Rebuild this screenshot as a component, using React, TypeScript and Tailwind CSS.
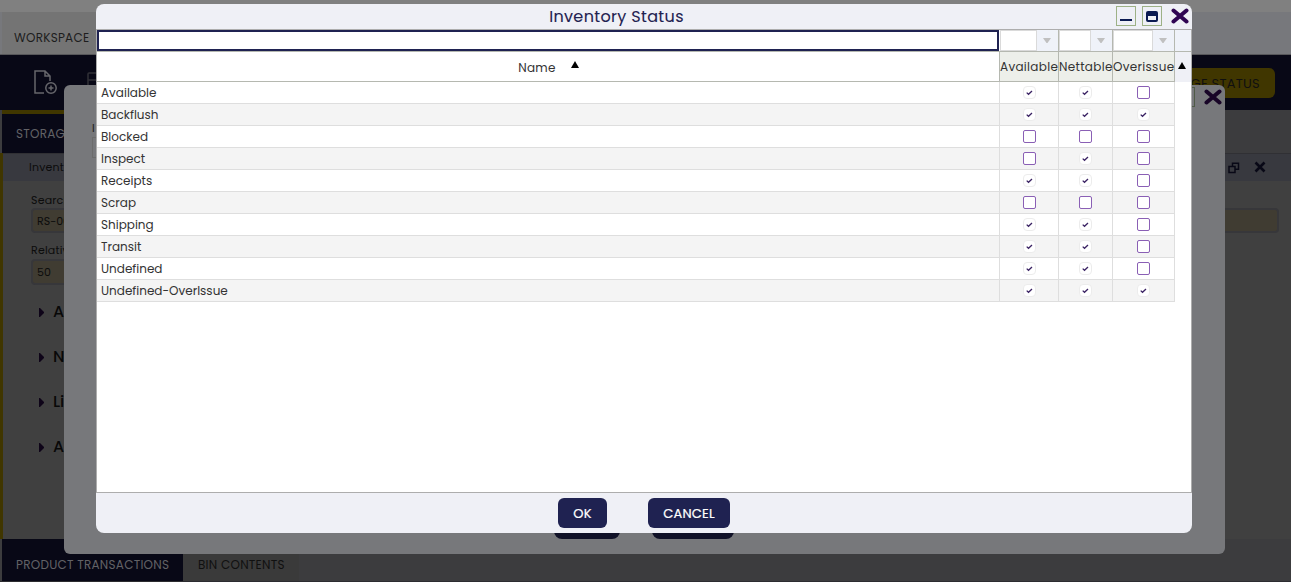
import React from "react";

type Row = { name: string; flags: boolean[] };

const rows: Row[] = [
  { name: "Available", flags: [true, true, false] },
  { name: "Backflush", flags: [true, true, true] },
  { name: "Blocked", flags: [false, false, false] },
  { name: "Inspect", flags: [false, true, false] },
  { name: "Receipts", flags: [true, true, false] },
  { name: "Scrap", flags: [false, false, false] },
  { name: "Shipping", flags: [true, true, false] },
  { name: "Transit", flags: [true, true, false] },
  { name: "Undefined", flags: [true, true, false] },
  { name: "Undefined-OverIssue", flags: [true, true, true] },
];

const columns = "grid grid-cols-[903px_59px_54px_62px_16px]";

function Check({ on }: { on: boolean }) {
  if (!on) {
    return <span className="block h-[13px] w-[13px] rounded-[2px] border border-[#8a5fb5] bg-white" />;
  }
  return (
    <span className="flex h-[13px] w-[13px] items-center justify-center rounded-[4px] border border-[#ececec] bg-white">
      <svg width="7" height="6" viewBox="0 0 7 6" fill="none" stroke="#3a2263" strokeWidth="1.3">
        <path d="M.7 2.6 2.5 4.3 6 1" />
      </svg>
    </span>
  );
}

function Cross({ className, color }: { className?: string; color: string }) {
  return (
    <svg className={className} viewBox="0 0 18 16" fill="none" stroke={color} strokeWidth="4" strokeLinecap="round">
      <path d="M2.5 2.5 15.5 13.5M15.5 2.5 2.5 13.5" />
    </svg>
  );
}

function Filter({ inner }: { inner: string }) {
  return (
    <div className="flex border-r border-[#b5b8b0] bg-[#eff2f9]">
      <div className={inner + " border border-[#dadada] bg-white"} />
      <div className="flex flex-1 items-center justify-center pr-px">
        <svg width="8" height="5" viewBox="0 0 8 5" fill="#c0c0c0"><path d="M0 0h8L4.5 5h-1z" /></svg>
      </div>
    </div>
  );
}

function Workspace() {
  return (
    <div className="flex h-[582px] flex-col bg-[#404040] text-[12px]">
      <div className="h-3 bg-[#808080]" />
      <div className="flex h-[43px] border-b border-[#57575a] bg-[#77787c] pl-[2px]">
        <div className="flex w-[110px] items-center bg-[#747474] pl-3 pt-[9px] tracking-[0.25px] text-[#1d1d1d]">WORKSPACE</div>
      </div>
      <div className="flex h-[55px] items-center justify-between bg-[#080816] pl-[33px] pr-4">
        <div className="flex items-center gap-[30px]">
          <svg width="25" height="25" viewBox="0 0 25 25" fill="none" stroke="#66666b" strokeWidth="1.5">
            <path d="M11 23H2V1h10l5 5v5M12 1v5h5" /><circle cx="18" cy="18" r="5.2" /><path d="M18 15.5v5M15.5 18h5" />
          </svg>
          <svg className="-ml-px" width="22" height="22" viewBox="0 0 22 22" fill="none" stroke="#303037" strokeWidth="1.5">
            <rect x="1" y="1" width="20" height="20" rx="1" /><path d="M1 8h20" />
          </svg>
        </div>
        <div className="flex h-[30px] w-[137px] items-center justify-end rounded-md bg-[#403600] pr-[15px] pt-[2px] text-[13px] tracking-[0.02em] text-[#101010]">CHANGE STATUS</div>
      </div>
      <div className="flex h-[43px] bg-[#3c3c3e] pl-[2px]">
        <div className="flex w-[100px] items-center border-t-4 border-[#403600] bg-[#080816] pl-[14px] tracking-[0.25px] text-[#626266]">STORAGE</div>
      </div>
      <div className="flex flex-1 flex-col border-l-[3px] border-[#403600] text-[11px] tracking-[0.2px] text-[#0c0c0c]">
        <div className="flex h-7 items-center justify-between border-t border-[#303034] bg-[#38393f] pl-[26px] pr-[25px]">
          <span>Invento</span>
          <span className="flex items-center gap-[14px]">
            <svg width="12" height="12" viewBox="0 0 12 12" fill="none" stroke="#080816" strokeWidth="1.5"><path d="M1 4.5h6v6H1zM4.5 4V1.2h6v6H7" /></svg>
            <svg className="mb-px" width="12" height="12" viewBox="0 0 12 12" fill="none" stroke="#080816" strokeWidth="2.6"><path d="m1.5 1.5 9 9M10.5 1.5l-9 9" /></svg>
          </span>
        </div>
        <div className="flex flex-col pl-7 pr-3">
          <span className="mt-[10px] h-[17px] leading-[18px]">Search</span>
          <div className="h-[25px] rounded border-2 border-[#37373a] bg-[#403c32] pl-1 leading-[22px] tracking-normal">RS-001</div>
          <span className="mt-[8px] h-[18px] leading-[18px]">Relative</span>
          <div className="h-[26px] w-[200px] rounded border-2 border-[#37373a] bg-[#403c32] pl-1 leading-[22px]">50</div>
        </div>
        <div className="flex flex-col pl-[36px] pt-[5px]">
          {["Att", "Not", "Lin", "Att "].map((t) => (
            <div key={t} className="flex h-[45px] items-center gap-[9px] text-[16px] font-medium tracking-normal text-[#080808]">
              <svg width="5" height="9" viewBox="0 0 5 9" fill="#0e0418"><path d="M0 0h1l4 4v1L1 9H0z" /></svg><span className="-mt-px">{t}</span>
            </div>
          ))}
        </div>
      </div>
      <div className="flex h-[43px] border-b border-[#2c2c30] bg-[#3c3c3e] pl-[2px] tracking-[0.25px]">
        <div className="flex w-[181px] items-center bg-[#080816] pl-[14px] pt-[9px] text-[#626266]">PRODUCT TRANSACTIONS</div>
        <div className="flex w-[116px] items-center bg-[#3a3a3a] pl-[15px] pt-[9px] text-[#101010]">BIN CONTENTS</div>
      </div>
    </div>
  );
}

export default function App() {
  return (
    <main className="relative h-[582px] w-[1291px] overflow-hidden font-['Poppins','Inter',sans-serif]">
      <Workspace />
      <section className="absolute left-[64px] top-[85px] flex h-[469px] w-[1161px] flex-col justify-between rounded-md bg-[#77787b]">
        <div className="flex justify-between pl-7 pr-[3px]">
          <div className="pt-[34px] text-[11px] leading-[18px] text-[#202020]">I<div className="h-[21px] w-24 border border-[#6c6c6c]" /></div>
          <div className="flex items-start gap-[9px] pt-[2px]"><span className="h-5 w-5 border border-[#505b48]" /><Cross className="mt-[2px] h-4 w-[18px]" color="#180527" /></div>
        </div>
        <div className="mb-[15px] flex justify-center gap-[32px] pr-[1px]"><span className="h-[30px] w-[66px] rounded-lg bg-[#101127]" /><span className="h-[30px] w-[82px] rounded-lg bg-[#101127]" /></div>
      </section>
      <section className="absolute left-24 top-1 flex h-[529px] w-[1096px] flex-col rounded-lg bg-[#eff0f6] text-[12px] text-[#333]">
        <header className="flex h-[25px] items-center pr-[3px]">
          <h1 className="w-[1020px] pl-[21px] text-center text-[16px] tracking-[0.35px] text-[#1f2251] [-webkit-text-stroke:0.1px_#1f2251]">Inventory Status</h1>
          <div className="flex flex-1 items-center justify-end pb-px">
            <span className="mr-[6px] flex h-5 w-5 items-center justify-center border border-[#9db186]"><span className="mt-[8px] h-[2px] w-3 bg-[#0b1a52]" /></span>
            <span className="mr-[9px] flex h-5 w-5 items-center justify-center border border-[#9db186]"><span className="h-[11px] w-3 rounded-[2px] border-2 border-t-[5px] border-[#0b1a52]" /></span>
            <Cross className="h-4 w-[18px]" color="#300553" />
          </div>
        </header>
        <div className="flex h-[464px] flex-col border border-[#adadad] bg-white">
          <div className={columns + " h-[22px] border-b border-[#b5b8b0]"}>
            <input aria-label="Name" className="mr-px h-[21px] border-2 border-[#1f2251] bg-white outline-none" />
            <Filter inner="w-[37px]" /><Filter inner="w-8" /><Filter inner="w-10" /><div className="bg-[#eff2f9]" />
          </div>
          <div className={columns + " h-[30px] text-center leading-[29px] tracking-[0.3px]"}>
            <div className="flex h-[30px] items-center justify-center gap-[15px] border-r border-b border-[#b5b8b0] pl-px"><span className="pt-[2px]">Name</span><svg className="mb-[4px]" width="8" height="7" viewBox="0 0 8 7"><path d="M4 0l4 7H0z" /></svg></div>
            <div className="h-[30px] border-r border-b border-[#b5b8b0] bg-[#edefea]">Available</div>
            <div className="h-[30px] border-r border-b border-[#b5b8b0] bg-[#edefea]">Nettable</div>
            <div className="h-[30px] border-r border-b border-[#b5b8b0] bg-[#edefea]">Overissue</div>
            <div className="flex h-[30px] items-center bg-[#eff0f6] pb-[3px] pl-[3px]"><svg width="8" height="7" viewBox="0 0 8 7"><path d="M4 0l4 7H0z" /></svg></div>
          </div>
          {rows.map((r, i) => (
            <div key={r.name} className={columns + " h-[22px]"}>
              <div className={(i % 2 ? "bg-[#f4f4f4]" : "bg-white") + " border-r border-b border-[#dedede] pl-[4px] leading-[21px]"}>{r.name}</div>
              {r.flags.map((on, n) => (
                <div key={n} className={(i % 2 ? "bg-[#f4f4f4]" : "bg-white") + " flex items-center justify-center border-r border-b border-[#dedede]"}><Check on={on} /></div>
              ))}
            </div>
          ))}
        </div>
        <footer className="flex flex-1 items-center justify-center gap-[41px] text-[13px] tracking-[0.2px] text-white [-webkit-text-stroke:0.2px_white]">
          <button className="h-[30px] w-[49px] rounded-md bg-[#1f2251] pt-px">OK</button>
          <button className="h-[30px] w-[82px] rounded-md bg-[#1f2251] pt-px">CANCEL</button>
        </footer>
      </section>
    </main>
  );
}
